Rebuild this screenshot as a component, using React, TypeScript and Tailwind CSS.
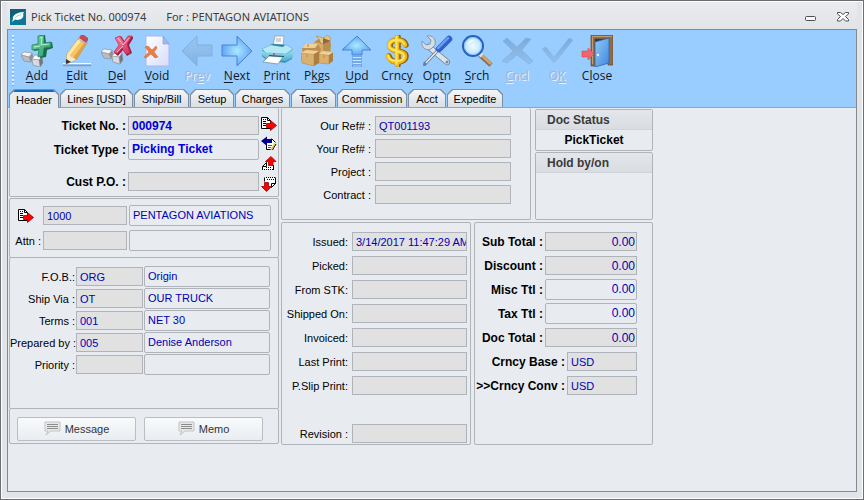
import { useState } from 'react';
import type { ReactNode } from 'react';

function Cubes({ y = 0 }: { y?: number }) {
  return (
    <g transform={`translate(0 ${y})`} stroke="#8a9198" strokeWidth=".5">
      <path d="M0 20l3-3 8 1 1 4-2 5-7-1z" fill="#8b9299" />
      <path d="M0 20l3-3 8 1-3 4z" fill="#f4f5f6" />
      <path d="M0 20l8 2 2 5-7-1z" fill="#b9bec4" />
      <path d="M11 24l3-4 7 1 1 7-3 4-7-2z" fill="#70777f" />
      <path d="M11 24l3-4 7 1-3 4z" fill="#fff" />
      <path d="M11 24l7 1 1 7-7-2z" fill="#d7dade" />
    </g>
  );
}

function Arrow({ d, disabled }: { d: string; disabled?: boolean }) {
  return <path d={d} fill={disabled ? 'url(#arrowOff)' : 'url(#arrowOn)'} stroke={disabled ? '#80afe0' : '#4a86d8'} strokeWidth="1" />;
}

const icons: Record<string, ReactNode> = {
  Add: (
    <>
      <Cubes />
      <path d="M18 1l6-1 1 8 6-1 1 6-6 2-1 7-6 1 0-8-6 1-1-5 6-3z" fill="#17694b" />
      <path d="M17 1l6-1v8l7-1v5l-7 1-1 8-5 1 1-8-7 1v-5l6-1z" fill="url(#green)" stroke="#218463" strokeWidth=".8" />
      <path d="M19 3l2-1-1 8 8-1M13 12l6-1" stroke="#b9f0cf" fill="none" />
    </>
  ),
  Edit: (
    <>
      <path d="M2 30.500h28" stroke="#8c9aa8" strokeWidth="1.500" />
      <path d="M2 28.500h28" stroke="#fff" strokeWidth="1" />
      <path d="M5 29l1-10L18 3l8 5-11 17z" fill="#f4c560" stroke="#a87a34" strokeWidth=".6" />
      <path d="M6 19L18 3l3 2L9 20z" fill="#ffe7a0" />
      <path d="M12 23L24 7l2 1-11 17z" fill="#dca34a" />
      <path d="M5 29l1-10 3 1 1 2 3 1 2 2z" fill="#f6e6c8" />
      <path d="M5 29v-5l5 3z" fill="#353535" />
      <path d="M17 4l2-3 8 5-2 3z" fill="#d9dbe2" stroke="#888" strokeWidth=".5" />
      <path d="M18 3l2-3 3 0 4 3v2l-2 3z" fill="#c04a5a" />
    </>
  ),
  Del: (
    <>
      <Cubes y={-3} />
      <path d="M15 3l5-2 4 6 4-6 5 1-5 8 3 8-5 3-4-6-5 6-4-3 6-7z" fill="#9f1d42" />
      <path d="M14 3l5-2 4 6 4-6 4 0-5 8 3 9-4 1-4-6-5 6-3-2 5-7z" fill="url(#red)" stroke="#c22c55" strokeWidth=".7" />
      <path d="M17 3l5 7 6-7M16 17l6-6" stroke="#ffb7c8" fill="none" />
    </>
  ),
  Void: (
    <>
      <path d="M5 1h17l6 7v23H5z" fill="url(#paper)" stroke="#a8b8ea" strokeWidth="1" />
      <path d="M22 1v8h6z" fill="#9db9f4" stroke="#7c98dd" strokeWidth=".6" />
      <path d="M4 12l3-1 4 4 4-4 1 2-3 4 4 5-3 1-4-4-5 4-2-1 5-5z" fill="#ec7d45" stroke="#c9602e" strokeWidth=".5" />
    </>
  ),
  Prev: <Arrow disabled d="M1 16L16 1v9h15v11H16v10z" />,
  Next: <Arrow d="M31 16L16 1v9H1v11h15v10z" />,
  Print: (
    <>
      <path d="M12 10l2-9 9 0-1 11z" fill="#f7f8f9" stroke="#8e989f" strokeWidth=".7" />
      <path d="M15 4h5M15 6h5" stroke="#a9b1b5" />
      <path d="M1 15l10-6 15 1 6 5-1 9-7 4-19-3-4-4z" fill="#3f98b8" />
      <path d="M1 14l10-5 15 1 6 4-7 5L5 18z" fill="#b4e8f4" stroke="#60b4cc" strokeWidth=".6" />
      <path d="M0 15l5 3 20 1 7-4v7l-7 4-20-3-4-3z" fill="url(#cyan)" />
      <path d="M9 10l3-1 12 1-2 2z" fill="#397e98" />
      <path d="M8 21l14 1-5 7-15-2z" fill="#fff" stroke="#6f8792" strokeWidth=".7" />
      <path d="M8 20.500l15 1" stroke="#1d566d" />
      <circle cx="13" cy="19" r="1" fill="#d73f52" />
    </>
  ),
  Pkgs: (
    <>
      <path d="M13 7l5-3 9 1 3 3-1 15-12 1z" fill="#ba8f50" />
      <path d="M13 7l9 2v15l-9-2z" fill="#d8ae6c" />
      <path d="M18 4l-3-3 8 2 3-3 4 3-2 4-8 2z" fill="#e8c486" stroke="#a9783c" strokeWidth=".5" />
      <path d="M22 3l8 3-8 3z" fill="#93683a" />
      <path d="M1 13l4-5 12 1 3 5-2 6H2z" fill="#bf8f4d" />
      <path d="M1 13l4-5 12 1-3 4z" fill="#f0d09a" />
      <path d="M0 18l13 1v12L1 28z" fill="#d9b070" stroke="#ac8044" strokeWidth=".5" />
      <path d="M13 19l5-3v12l-5 3z" fill="#ae7e40" />
      <path d="M0 18l5-3 13 1-5 3z" fill="#efd09a" />
      <path d="M18 19l10 1v9l-10-1z" fill="#dbb06c" stroke="#ac8044" strokeWidth=".5" />
      <path d="M28 20l4-3v9l-4 3z" fill="#ae7e40" />
      <path d="M18 19l4-3 10 1-4 3z" fill="#efd09a" />
      <path d="M6 19v3M23 20v3M7 9v3" stroke="#b88a4a" />
    </>
  ),
  Upd: (
    <>
      <Arrow d="M16 1l14 14h-9v5H11v-5H1z" />
      <path d="M11 22.500h10M11 25.500h10M11 28.500h10M11 31h10" stroke="#4a86d8" strokeWidth="2" />
      <path d="M11.500 22.500h9M11.500 25.500h9M11.500 28.500h9M11.500 31h9" stroke="#c9e6ff" strokeWidth="1.200" />
    </>
  ),
  Crncy: (
    <g fill="none" strokeLinecap="round">
      <path d="M17 2v28M25 10c-1-4-4-5-8-5-5 0-8 2-8 6 0 6 16 4 16 10 0 4-4 6-8 6-5 0-8-2-9-6" stroke="#875c0c" strokeWidth="5.500" />
      <path d="M16 2v28M24 10c-1-4-4-5-8-5-5 0-8 2-8 6 0 6 16 4 16 10 0 4-4 6-8 6-5 0-8-2-9-6" stroke="#eeb51c" strokeWidth="4.500" />
      <path d="M15.500 2v27M23 9c-1-3-4-4-7-4-5 0-8 2-8 6 0 6 15 4 15 10 0 4-4 5-7 5-5 0-8-1-9-5" stroke="#fde65a" strokeWidth="2" />
    </g>
  ),
  Optn: (
    <>
      <path d="M8 12L26 27" stroke="#6f7d8c" strokeWidth="6" strokeLinecap="round" />
      <path d="M8 12L26 27" stroke="#dce4ec" strokeWidth="4.500" strokeLinecap="round" />
      <path d="M6 1l4 4-1 4-4 1-4-4c-1 7 4 10 9 8l4-4c1-6-2-10-8-9z" fill="#d5dde5" stroke="#7a8897" strokeWidth=".8" />
      <circle cx="26" cy="27" r="1.500" fill="#77899a" />
      <path d="M17 15L4 29" stroke="#667585" strokeWidth="3" strokeLinecap="round" />
      <path d="M17 15L4 29" stroke="#e7edf2" strokeWidth="1.500" strokeLinecap="round" />
      <path d="M2 31l1-5 3 3-2 2z" fill="#6681a0" />
      <path d="M18 14L28 4" stroke="#2f5fc8" strokeWidth="6.500" strokeLinecap="round" />
      <path d="M17 13L27 3" stroke="#6a9bf2" strokeWidth="2.500" strokeLinecap="round" />
    </>
  ),
  Srch: (
    <>
      <path d="M19 20L30 30" stroke="#8a6a48" strokeWidth="4.500" />
      <path d="M19 19L30 29" stroke="#cfa26c" strokeWidth="3" />
      <path d="M17 17l4 4" stroke="#d9e0e6" strokeWidth="4" />
      <circle cx="12" cy="11" r="10" fill="url(#lens)" stroke="#2462bd" strokeWidth="2" />
      <circle cx="12" cy="11" r="8.500" fill="none" stroke="#8bc3fa" strokeWidth="1" />
      <path d="M6 10c1-4 4-6 8-5-4 1-6 3-8 5z" fill="#fff" />
    </>
  ),
  Cncl: <path d="M2 6l4-3 10 9 9-9 5 1-9 11 11 11-4 3-12-9-10 8-5-2 11-10z" fill="url(#markOff)" stroke="#80afe0" strokeWidth=".6" />,
  OK: <path d="M1 14l4-2 8 10L28 3l4 2-16 20-3 3z" fill="url(#markOff)" stroke="#88b5e4" strokeWidth=".6" />,
  Close: (
    <>
      <path d="M10 0h22v30h-5V4H14v27h-4z" fill="#8f6c47" stroke="#665038" strokeWidth=".8" />
      <path d="M11.500 29V1.500H31" stroke="#c79c68" fill="none" />
      <path d="M14 4h13v3l-13 2z" fill="#233a5b" />
      <path d="M14 7l14-4v25l-14 4z" fill="url(#door)" stroke="#2b65b9" strokeWidth=".8" />
      <circle cx="17" cy="20" r="1.200" fill="#f3f7fc" />
      <path d="M1 16h6v-3l6 6-6 6v-3H1z" fill="#f0646c" stroke="#d84a56" strokeWidth=".6" />
    </>
  ),
};

const tools = [
  { name: 'Add', key: 0 },
  { name: 'Edit', key: 0 },
  { name: 'Del', key: 0 },
  { name: 'Void', key: 0 },
  { name: 'Prev', key: 2, disabled: true },
  { name: 'Next', key: 0 },
  { name: 'Print', key: 0 },
  { name: 'Pkgs', key: 1 },
  { name: 'Upd', key: 0 },
  { name: 'Crncy', key: 4 },
  { name: 'Optn', key: 2 },
  { name: 'Srch', key: 0 },
  { name: 'Cncl', key: 0, disabled: true },
  { name: 'OK', key: 1, disabled: true },
  { name: 'Close', key: 1 },
];

const tabs = [
  { name: 'Header', width: 'w-[50px]' },
  { name: 'Lines [USD]', width: 'w-[73px]' },
  { name: 'Ship/Bill', width: 'w-[55px]' },
  { name: 'Setup', width: 'w-[44px]' },
  { name: 'Charges', width: 'w-[55px]' },
  { name: 'Taxes', width: 'w-[45px]' },
  { name: 'Commission', width: 'w-[70px]' },
  { name: 'Acct', width: 'w-[38px]' },
  { name: 'Expedite', width: 'w-[56px]' },
];

// Shared gradients for the toolbar drawings
function Gradients() {
  return (
    <svg width="0" height="0" className="absolute" aria-hidden="true">
      <defs>
        <radialGradient id="arrowOn"><stop offset="0" stopColor="#a9eaff" /><stop offset="1" stopColor="#64a4f4" /></radialGradient>
        <linearGradient id="arrowOff" x2="0" y2="1"><stop offset="0" stopColor="#9ac6f2" /><stop offset="1" stopColor="#82b2e4" /></linearGradient>
        <linearGradient id="markOff" x2="0" y2="1"><stop offset="0" stopColor="#7aabdc" /><stop offset="1" stopColor="#93c0ec" /></linearGradient>
        <linearGradient id="green" x2="1" y2="1"><stop offset="0" stopColor="#7bdba8" /><stop offset="1" stopColor="#26996b" /></linearGradient>
        <linearGradient id="red" x2="1" y2="1"><stop offset="0" stopColor="#f47f9b" /><stop offset="1" stopColor="#d52d59" /></linearGradient>
        <linearGradient id="paper" x2="1" y2="1"><stop offset="0" stopColor="#fff" /><stop offset="1" stopColor="#d7dcfa" /></linearGradient>
        <linearGradient id="cyan" x2="0" y2="1"><stop offset="0" stopColor="#9cdff0" /><stop offset="1" stopColor="#4fb0d0" /></linearGradient>
        <radialGradient id="lens"><stop offset="0" stopColor="#effbff" /><stop offset="1" stopColor="#b5e2ff" /></radialGradient>
        <linearGradient id="door" x2="1" y2="1"><stop offset="0" stopColor="#90cbfa" /><stop offset="1" stopColor="#3f87dd" /></linearGradient>
      </defs>
    </svg>
  );
}

function ToolButton({ name, hotkey, disabled }: { name: string; hotkey: number; disabled?: boolean }) {
  return (
    <button
      disabled={disabled}
      className={
        'flex w-10 flex-col items-center gap-px font-["Open_Sans",sans-serif] text-[12px] leading-[16px] ' +
        (disabled ? 'text-[#a3b4ca] [text-shadow:1px_1px_0_#e6f1ff]' : 'text-[#101828]')
      }
    >
      <svg width="32" height="32" viewBox="0 0 32 32" aria-hidden="true">{icons[name]}</svg>
      <span>
        {name.slice(0, hotkey)}
        <span className="underline underline-offset-2">{name[hotkey]}</span>
        {name.slice(hotkey + 1)}
      </span>
    </button>
  );
}

type RecordKind = 'next' | 'back' | 'up' | 'down';

function RecordIcon({ kind }: { kind: RecordKind }) {
  return (
    <svg width="16" height="16" viewBox="0 0 16 16" aria-hidden="true">
      {kind === 'next' && (
        <>
          <path d="M.5 1.500h6l3 3v8h-9z" fill="#fff" stroke="#000" />
          <path d="M6.500 1.500v3h3M2 3.500h1M4 3.500h1M2 5.500h3M2 7.500h3M2 9.500h3" stroke="#000" fill="none" />
          <path d="M5.500 7.500h4v-3l6 5-6 5v-3h-4z" fill="#f00" stroke="#900" strokeWidth=".8" />
        </>
      )}
      {kind === 'back' && (
        <>
          <path d="M4 6l7-4 4 5v6H5z" fill="#fff" />
          <path d="M10.500 2.500l4 4M5.500 9v4.500h5" stroke="#000" fill="none" />
          <path d="M7 9.500h4M7 11.500h3" stroke="#e02020" />
          <path d="M0 5l6-4.500V3h5v4H6v3z" fill="#000090" />
          <path d="M10 14l4-7" stroke="#e8d020" strokeWidth="1.500" />
          <path d="M11.500 14l3.500-6" stroke="#000" />
        </>
      )}
      {kind === 'up' && (
        <>
          <path d="M1.500 13.500v-3l4-4h7v7z" fill="#fff" />
          <path d="M1.500 14v-3.500l4-4v4h-4M12.500 9v5" stroke="#000" fill="none" />
          <path d="M3 13.500h1M5 13.500h1M7 13.500h1M9 13.500h1M11 13.500h1M5 11.500h1M7 11.500h1M9 11.500h1" stroke="#000" />
          <path d="M7.500 9.500v-4h-3l5.500-5 5 5h-3v4z" fill="#f00" stroke="#900" strokeWidth=".8" />
        </>
      )}
      {kind === 'down' && (
        <>
          <path d="M3 2h11v6l-4 4H4z" fill="#fff" />
          <path d="M14.500 1.500v6l-4 4v-4h4M3.500 1.500v4" stroke="#000" fill="none" />
          <path d="M5 1.500h1M7 1.500h1M9 1.500h1M11 1.500h1M13 1.500h1M6 3.500h1M8 3.500h1M10 3.500h1M12 3.500h1" stroke="#000" />
          <path d="M3.500 6.500h4v4h3L5.500 15.500l-5-5h3z" fill="#f00" stroke="#900" strokeWidth=".8" />
        </>
      )}
    </svg>
  );
}

type FieldProps = { id: string; value?: string; open?: boolean; tone?: string; className?: string; label?: string };

function Field({ id, value = '', open, tone = 'text-[#0000b4]', className = '', label }: FieldProps) {
  return (
    <input
      id={id}
      aria-label={label}
      defaultValue={value}
      readOnly={!open}
      className={
        'shrink-0 border border-[#afb4bb] pl-[3px] outline-none ' +
        (open ? 'h-[21px] rounded-xs bg-[#e8ecf1] pb-px ' : 'h-[19px] bg-[#e1e1e1] ') +
        tone + ' ' + className
      }
    />
  );
}

function Label({ id, children }: { id: string; children: ReactNode }) {
  return <label htmlFor={id} className="min-w-0 flex-1 whitespace-nowrap text-right">{children}</label>;
}

function Panel({ className = '', children }: { className?: string; children: ReactNode }) {
  return <section className={'rounded-xs border border-[#afb4bb] ' + className}>{children}</section>;
}

function NoteButton({ children }: { children: ReactNode }) {
  return (
    <button className="flex h-6 flex-1 items-center justify-center gap-1 rounded-xs border border-[#b9bec4] bg-linear-to-b from-[#f8fafb] to-[#e9edf1] text-[#333]">
      <svg width="17" height="15" viewBox="0 0 17 15" aria-hidden="true">
        <path d="M1 1h15v9H7l-5 4 2-4H1z" fill="#e8e8e8" stroke="#c3c3c3" />
        <path d="M3 3.500h11M3 5.500h11M3 7.500h11" stroke="#8c8c8c" />
      </svg>
      {children}
    </button>
  );
}

const shipping = [
  { label: 'F.O.B.:', code: 'ORG', text: 'Origin' },
  { label: 'Ship Via :', code: 'OT', text: 'OUR TRUCK' },
  { label: 'Terms :', code: '001', text: 'NET 30' },
  { label: 'Prepared by :', code: '005', text: 'Denise Anderson' },
  { label: 'Priority :', code: '', text: '' },
];

const refs = [
  { label: 'Our Ref# :', value: 'QT001193' },
  { label: 'Your Ref# :', value: '' },
  { label: 'Project :', value: '' },
  { label: 'Contract :', value: '' },
];

const dates = [
  { label: 'Issued:', value: '3/14/2017 11:47:29 AM' },
  { label: 'Picked:', value: '' },
  { label: 'From STK:', value: '' },
  { label: 'Shipped On:', value: '' },
  { label: 'Invoiced:', value: '' },
  { label: 'Last Print:', value: '' },
  { label: 'P.Slip Print:', value: '' },
];

const totals = [
  { label: 'Sub Total :', open: false },
  { label: 'Discount :', open: false },
  { label: 'Misc Ttl :', open: true },
  { label: 'Tax Ttl :', open: true },
  { label: 'Doc Total :', open: false },
];

function HeaderForm() {
  return (
    <div className="flex items-start gap-[2px] pl-px">
      <div className="flex w-[270px] shrink-0 flex-col">
        <Panel className="flex h-[89px] border-t-0 pb-1 pl-2 pr-px pt-2">
          <div className="flex flex-1 flex-col gap-1 text-[12px] font-bold text-black">
            <div className="flex items-center gap-[2px]">
              <Label id="ticket-no">Ticket No. :</Label>
              <Field id="ticket-no" value="000974" tone="text-[#0000e0]" className="w-[131px] font-bold" />
            </div>
            <div className="flex items-center gap-[2px]">
              <Label id="ticket-type">Ticket Type :</Label>
              <Field id="ticket-type" value="Picking Ticket" open tone="text-[#0000e0]" className="w-[131px] font-bold" />
            </div>
            <div className="mt-2 flex items-center gap-[2px]">
              <Label id="cust-po">Cust P.O. :</Label>
              <Field id="cust-po" className="w-[131px]" />
            </div>
          </div>
          <div className="ml-[2px] flex flex-col gap-1">
            <button aria-label="Next ticket"><RecordIcon kind="next" /></button>
            <button aria-label="Previous ticket"><RecordIcon kind="back" /></button>
            <button aria-label="First ticket"><RecordIcon kind="up" /></button>
            <button aria-label="Last ticket"><RecordIcon kind="down" /></button>
          </div>
        </Panel>
        <Panel className="mt-px flex h-[60px] flex-col justify-center gap-1 pl-1 pr-[7px]">
          <div className="flex items-center gap-[2px]">
            <button aria-label="Open customer" className="ml-1 mr-auto"><RecordIcon kind="next" /></button>
            <Field id="cust-code" label="Customer code" value="1000" className="w-[84px]" />
            <Field id="cust-name" label="Customer name" value="PENTAGON AVIATIONS" open className="w-[142px]" />
          </div>
          <div className="flex items-center gap-[2px]">
            <Label id="attn">Attn :</Label>
            <Field id="attn" className="w-[84px]" />
            <Field id="attn-name" label="Attention name" open className="w-[142px]" />
          </div>
        </Panel>
        <Panel className="-mt-px flex h-[152px] flex-col gap-px pr-2 pt-2">
          {shipping.map((s) => (
            <div key={s.label} className="flex items-center gap-px">
              <Label id={s.label}>{s.label}</Label>
              <Field id={s.label} value={s.code} className="w-[67px]" />
              <Field id={s.label + 'text'} label={s.label + ' description'} value={s.text} open className="w-[126px]" />
            </div>
          ))}
        </Panel>
        <Panel className="-mt-px flex h-9 items-center gap-2 pl-[7px] pr-[15px] pt-[5px]">
          <NoteButton>Message</NoteButton>
          <NoteButton>Memo</NoteButton>
        </Panel>
      </div>

      <div className="flex flex-col gap-[2px]">
        <div className="flex gap-1">
          <Panel className="flex h-[112px] w-[250px] flex-col gap-1 border-t-0 pr-[19px] pt-2">
            {refs.map((r) => (
              <div key={r.label} className="flex items-center gap-1">
                <Label id={r.label}>{r.label}</Label>
                <Field id={r.label} value={r.value} className="w-[136px]" />
              </div>
            ))}
          </Panel>
          <div className="flex w-[118px] flex-col gap-px pt-px text-[12px] font-bold">
            <Panel>
              <h2 className="h-5 border-b border-[#d0d4d9] bg-linear-to-b from-[#e3e7eb] to-[#d9dde2] pl-[11px] leading-5 text-[#3a3a3a]">Doc Status</h2>
              <p className="h-5 text-center leading-5 text-black">PickTicket</p>
            </Panel>
            <Panel className="flex-1">
              <h2 className="h-5 border-b border-[#d0d4d9] bg-linear-to-b from-[#e3e7eb] to-[#d9dde2] pl-[11px] leading-5 text-[#3a3a3a]">Hold by/on</h2>
            </Panel>
          </div>
        </div>
        <div className="flex gap-[3px]">
          <Panel className="flex h-[223px] w-[190px] flex-col gap-[5px] pr-[3px] pt-[9px]">
            {dates.map((d) => (
              <div key={d.label} className="flex items-center gap-1">
                <Label id={d.label}>{d.label}</Label>
                <Field id={d.label} value={d.value} className="w-[115px]" />
              </div>
            ))}
            <div className="mb-px mt-auto flex items-center gap-1">
              <Label id="revision">Revision :</Label>
              <Field id="revision" className="w-[115px]" />
            </div>
          </Panel>
          <Panel className="flex h-[223px] w-[179px] flex-col gap-[3px] pr-[15px] pt-2 text-[12px] font-bold text-black">
            {totals.map((t) => (
              <div key={t.label} className="flex h-[21px] items-center gap-[2px]">
                <Label id={t.label}>{t.label}</Label>
                <Field id={t.label} value="0.00" open={t.open} className="w-[92px] pr-px text-right font-normal" />
              </div>
            ))}
            <div className="flex h-[21px] items-center gap-[2px]">
              <Label id="base">Crncy Base :</Label>
              <Field id="base" value="USD" className="w-[70px] text-[11px] font-normal" />
            </div>
            <div className="flex h-[21px] items-center gap-[2px]">
              <Label id="conv">&gt;&gt;Crncy Conv :</Label>
              <Field id="conv" value="USD" className="w-[70px] text-[11px] font-normal" />
            </div>
          </Panel>
        </div>
      </div>
    </div>
  );
}

export default function App() {
  const [tab, setTab] = useState('Header');

  return (
    <div className="flex min-h-screen flex-col border border-[#6c6d72] bg-[#e1e5e9] font-['Liberation_Sans',sans-serif] text-[11px] leading-[14px] text-black">
      <Gradients />
      <div className="flex flex-1 flex-col border border-white px-[5px] pb-[6px]">
        <header className="flex h-[27px] items-center bg-linear-to-b from-[#eaebef] to-[#e1e5e8] pl-[3px] pr-2 pt-[3px] font-['Noto_Sans',sans-serif] text-[11px] text-[#3c3c3c]">
          <svg width="16" height="16" viewBox="0 0 16 16" aria-hidden="true">
            <rect width="16" height="16" fill="#126078" />
            <path d="M0 16V9l7-5 9-3v15z" fill="#0d7896" />
            <path d="M2 13l1-3c-1-4 5-7 11-7l-1 2c2 4-4 7-8 5.500z" fill="#fff" />
            <path d="M5 9c1-2 4-3 6-3" stroke="#9bd1dc" fill="none" />
          </svg>
          <h1 className="ml-[5px] flex flex-1 gap-5">
            <span>Pick Ticket No. 000974</span>
            <span>For : PENTAGON AVIATIONS</span>
          </h1>
          <button aria-label="Minimize" className="mr-5 pt-1">
            <svg width="12" height="6" viewBox="0 0 12 6"><rect x=".5" y=".5" width="10" height="4" rx="1" fill="#f7f8f9" stroke="#4c4f55" /></svg>
          </button>
          <button aria-label="Close window">
            <svg width="12" height="10" viewBox="0 0 12 10">
              <path d="M.5.500h3L6 2.500 8.500.500h3v1.500L8.500 4.500l3 3v1.500h-3L6 6.500 3.500 9h-3V7.500l3-3-3-2.500z" fill="#fff" stroke="#4c4f55" />
            </svg>
          </button>
        </header>

        <main className="flex-1 border border-[#858a90] bg-[#e8ecf1]">
          <div className="border-b border-[#94a3b5] bg-[#99ccff]">
            <div className="flex h-[59px] pl-1 pt-[5px]">
              <div className="mr-[3px] h-[52px] w-[2px] bg-[repeating-linear-gradient(#dcecff_0_2px,#7fa9d6_2px_3px,#99ccff_3px_4px)]" />
              {tools.map((t) => (
                <ToolButton key={t.name} name={t.name} hotkey={t.key} disabled={t.disabled} />
              ))}
            </div>
            <nav className="flex items-end gap-px pl-px" role="tablist">
              {tabs.map((t) => (
                <button
                  key={t.name}
                  role="tab"
                  aria-selected={t.name === tab}
                  onClick={() => setTab(t.name)}
                  className={
                    'bg-[#7d8fa3] px-px pt-px [clip-path:polygon(0_5px,5px_0,calc(100%-5px)_0,100%_5px,100%_100%,0_100%)] ' +
                    t.width + (t.name === tab ? ' -mb-px h-[19px]' : ' h-[18px]')
                  }
                >
                  <span
                    className={
                      'block h-full whitespace-nowrap [clip-path:polygon(0_5px,5px_0,calc(100%-5px)_0,100%_5px,100%_100%,0_100%)] ' +
                      (t.name === tab
                        ? 'border-t-2 border-[#0c6fc0] bg-[#e8ecf1] leading-[16px]'
                        : 'bg-linear-to-b from-[#f4f6f8] to-[#dadfe4] leading-[18px]')
                    }
                  >
                    {t.name}
                  </span>
                </button>
              ))}
            </nav>
          </div>
          <HeaderForm />
        </main>
      </div>
    </div>
  );
}
